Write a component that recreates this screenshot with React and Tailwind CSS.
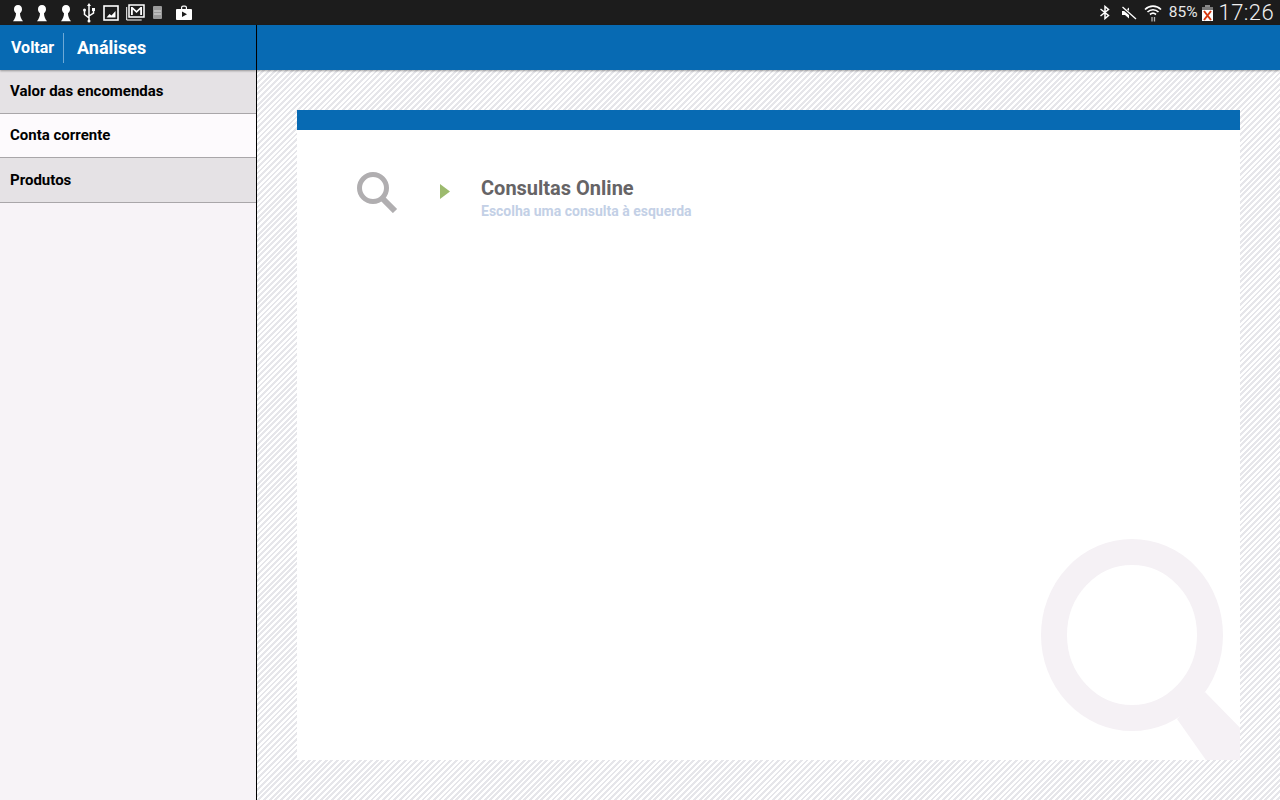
const Keyhole = () => (
  <svg width="14" height="18" viewBox="0 0 14 18" fill="#fff"><path d="M7 1C4.4 1 3 3 3 5.2c0 1.8.8 3.1 2 4 0 3-1.2 5.8-3 8h10c-1.8-2.2-3-5-3-8 1.2-.9 2-2.200 2-4C11 3 9.600 1 7 1z" /></svg>
);

const LeftIcons = () => (
  <div className="flex items-center h-full pl-[11px]">
    <div className="w-[24px] flex"><Keyhole /></div>
    <div className="w-[24px] flex"><Keyhole /></div>
    <div className="w-[23px] flex"><Keyhole /></div>
    <svg className="mr-[7px]" width="14" height="20" viewBox="0 0 14 20" fill="none" stroke="#fff" strokeWidth="1.500"><path d="M7 19V2M7 15L2.500 11.500V8M7 13l4.500-3V7" /><path d="M7 0L5 3h4z" fill="#fff" stroke="none" /><circle cx="2.500" cy="7" r="1.500" fill="#fff" stroke="none" /><rect x="10" y="5" width="3" height="3" fill="#fff" stroke="none" /><circle cx="7" cy="18" r="1.500" fill="#fff" stroke="none" /></svg>
    <svg className="mr-[7px]" width="16" height="16" viewBox="0 0 16 16" fill="none"><rect x="1" y="1" width="14" height="14" stroke="#fff" strokeWidth="1.600" /><path d="M3.500 12.500L6.500 9l2 1.500L12.500 6v6.500z" fill="#fff" /></svg>
    <svg className="mr-[8px]" width="19" height="17" viewBox="0 0 19 17" fill="none"><path d="M.700 3v13h15" stroke="#fff" strokeWidth="1" /><rect x="3" y="1" width="15" height="12" stroke="#fff" strokeWidth="1.500" /><path d="M5 3v8h1.800V5.500L10.500 9l3.700-3.500V11H16V3h-1.500l-4 3.800L6.500 3z" fill="#fff" /></svg>
    <svg className="mr-[14px]" width="9" height="13" viewBox="0 0 9 13" fill="#9a9a9a"><rect x="0" y="0" width="9" height="13" rx="1" /><path d="M1 5h7M1 8h7" stroke="#ddd" strokeWidth="1" /></svg>
    <svg width="16" height="15" viewBox="0 0 16 15" fill="#fff"><path fillRule="evenodd" d="M1 4h4V2.500C5 1.300 6 .500 7 .500h2c1 0 2 .800 2 2V4h4c.5 0 1 .5 1 1v9c0 .5-.5 1-1 1H1c-.5 0-1-.5-1-1V5c0-.5.500-1 1-1zm5.200 0h3.600V2.500c0-.5-.3-.8-.8-.8H7c-.5 0-.8.300-.8.800zM6 6.500V12l5-2.800z" /></svg>
  </div>
);

const RightIcons = () => (
  <div className="flex items-center h-full">
    <svg className="mr-[10px]" width="12" height="15" viewBox="0 0 12 15" fill="none" stroke="#fff" strokeWidth="1.500"><path d="M1.500 4l8 6.500L6 13.500v-12l3.500 3L1.500 11" /></svg>
    <svg className="mr-[7px]" width="16" height="14" viewBox="0 0 16 14" fill="none"><path d="M1 5v4h3l4 3.500V1.500L4 5z" fill="#fff" /><path d="M1.500 1.500l13 11" stroke="#1c1c1c" strokeWidth="3" /><path d="M1.500 1l13.500 12" stroke="#fff" strokeWidth="1.300" /></svg>
    <svg className="mr-[7px]" width="18" height="19" viewBox="0 0 18 19" fill="none" stroke="#fff" strokeWidth="1.700"><path d="M1 6.500c4.500-4.500 11.500-4.500 16 0M3.500 9c3-3 8-3 11 0M6 11.500c1.700-1.500 4.300-1.500 6 0" /><path d="M8 14v4.500M10.500 14v4.500" stroke="#b5b5b5" strokeWidth="1.300" /></svg>
    <span className="font-['Roboto',sans-serif] text-[15.5px] leading-none text-[#e8e8e8] mr-[4px]">85%</span>
    <svg className="mr-[6px]" width="11" height="16" viewBox="0 0 11 16"><rect x="3" y="0" width="5" height="2" fill="#8a8a8a" /><rect x="0" y="2" width="11" height="4" fill="#7a7a7a" /><rect x="0" y="5" width="11" height="11" fill="#fff" /><path d="M2 6l7 9M9 6l-7 9" stroke="#d8380f" strokeWidth="2" /></svg>
    <span className="font-['Roboto',sans-serif] font-light text-[22px] leading-none tracking-[0.4px] text-[#f0f0f0] mr-[6px]">17:26</span>
  </div>
);

const rows = [
  { label: "Valor das encomendas", cls: "bg-[#e5e2e5] h-[44px]" },
  { label: "Conta corrente", cls: "bg-[#fdfafd] h-[44px]" },
  { label: "Produtos", cls: "bg-[#e5e2e5] h-[45px]" },
];

export default function App() {
  return (
    <div className="w-[1280px] h-[800px] overflow-hidden flex flex-col font-['Roboto',sans-serif] bg-white">
      <div className="h-[25px] bg-[#1c1c1c] flex items-center justify-between shrink-0">
        <LeftIcons />
        <RightIcons />
      </div>
      <div className="flex flex-1 min-h-0">
        <aside className="w-[257px] shrink-0 border-r border-black bg-[#f7f3f7] flex flex-col">
          <div className="h-[45px] bg-[#076ab3] flex items-center shrink-0 shadow-[0_1px_2px_rgba(0,0,0,0.35)] relative">
            <span className="ml-[11px] w-[52px] text-white font-bold text-[16px] leading-none">Voltar</span>
            <span className="w-px h-[30px] bg-[#6ea9d6]" />
            <span className="ml-[13px] text-white font-bold text-[18px] leading-none">Análises</span>
          </div>
          {rows.map((r) => (
            <div key={r.label} className={`${r.cls} border-b border-[#a9a6a9] flex items-center pl-[10px] text-black font-bold text-[15px] leading-none`}>
              {r.label}
            </div>
          ))}
        </aside>
        <main className="flex-1 min-w-0 flex flex-col bg-[repeating-linear-gradient(135deg,#e6e6ea_0px,#e6e6ea_2px,#ffffff_2px,#ffffff_4px)]">
          <div className="h-[45px] bg-[#076ab3] shrink-0 shadow-[0_1px_2px_rgba(0,0,0,0.35)]" />
          <div className="flex-1 min-h-0 pt-[40px] pr-[40px] pb-[40px] pl-[40px] flex">
            <section className="flex-1 bg-white flex flex-col relative overflow-hidden">
              <div className="h-[20px] bg-[#076ab3] shrink-0" />
              <div className="flex items-start pt-[38px] pl-[60px]">
                <svg className="mt-[1px]" width="42" height="44" viewBox="0 0 42 44" fill="none" stroke="#b0aeb0"><circle cx="16" cy="19" r="13.500" strokeWidth="5" /><path d="M25 29l13 13" strokeWidth="6" /></svg>
                <svg className="ml-[41px] mt-[16px]" width="10" height="15" viewBox="0 0 10 15"><path d="M0 0l10 7.500L0 15z" fill="#9cba6e" /></svg>
                <div className="ml-[31px] flex flex-col mt-[8px]">
                  <span className="text-[20px] leading-[24px] font-bold text-[#666466]">Consultas Online</span>
                  <span className="text-[14px] leading-[16px] mt-[3px] font-bold text-[#c3d0e6]">Escolha uma consulta à esquerda</span>
                </div>
              </div>
              <svg className="absolute right-0 bottom-0" width="200" height="222" viewBox="0 0 200 222" fill="none"><ellipse cx="92" cy="97" rx="78" ry="83" stroke="#f5f1f5" strokeWidth="26" /><path d="M165 154l55 56-40 32-43-61z" fill="#f5f1f5" /></svg>
            </section>
          </div>
        </main>
      </div>
    </div>
  );
}
